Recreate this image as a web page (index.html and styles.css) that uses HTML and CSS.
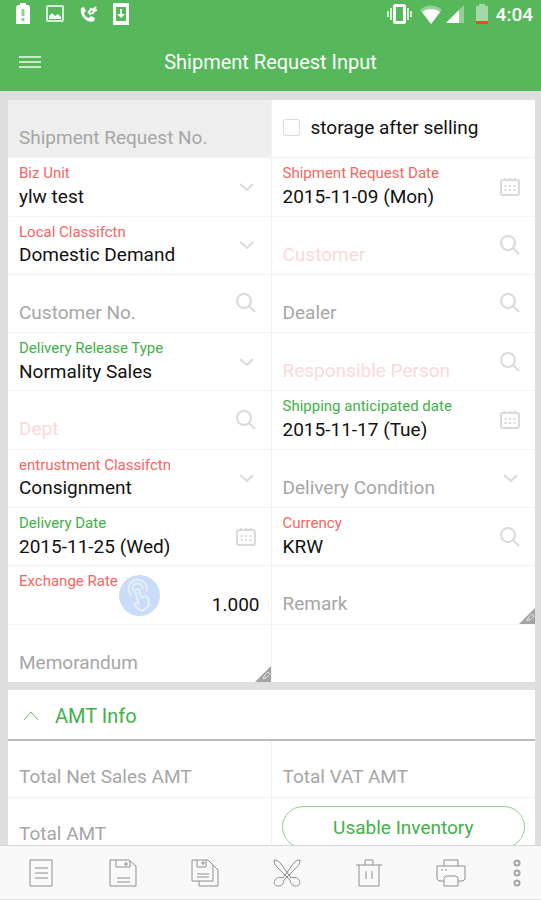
FILE: index.html
```html
<!DOCTYPE html>
<html lang="en">
<head>
    <meta charset="UTF-8">
    <meta name="viewport" content="width=device-width, initial-scale=1.0">
    <title>Shipment Request Input</title>
    <link rel="stylesheet" href="styles.css">
</head>
<body>
    <!-- Shared icons -->
    <svg class="sprite" aria-hidden="true">
        <symbol id="arrow" viewBox="0 0 20 20"><path d="M4 7l7 6 6-6"/></symbol>
        <symbol id="search" viewBox="0 0 20 20"><circle cx="8" cy="8" r="7"/><path d="M13 13l6 6"/></symbol>
        <symbol id="calendar" viewBox="0 0 20 20"><rect x="1" y="3" width="18" height="15" rx="2"/><path d="M5 1v3M10 1v3M15 1v3M4.500 9h2M9 9h2M13.500 9h2M4.500 13h2M9 13h2M13.500 13h2"/></symbol>
        <symbol id="corner" viewBox="0 0 16 16"><path class="corner-fill" d="M16 0v16H0z"/><path class="corner-pen" d="M8 13l1-3 4-4 2 2-4 4zM9.500 10l2 2"/></symbol>
    </svg>

    <header>
        <div class="status-bar">
            <svg width="14" height="22" viewBox="0 0 14 22"><path fill="#fff" d="M4 0h6v2h2.500L14 4v17H0V4l1.500-2H4z"/><path stroke="#8fcf93" stroke-width="3" d="M7 6v7M7 15v3"/></svg>
            <svg width="18" height="18" viewBox="0 0 18 18"><rect x="1" y="1" width="16" height="15" rx="1" fill="none" stroke="#d5efd7" stroke-width="2"/><path fill="#fff" d="M3 14v-3l3-3 3 3 3-2 3 3v2z"/></svg>
            <svg width="17" height="17" viewBox="0 0 17 17"><path fill="#fff" d="M1 2l3-1 2 4-2 2c1 3 2 4 5 5l2-2 4 2-1 3c-2 1-5 1-8-1C2 11 0 7 1 2z"/><path fill="none" stroke="#fff" stroke-width="2" d="M8 7l3-4 2 1 3-3M9 8l4-1 1-2 3-1"/></svg>
            <svg width="16" height="22" viewBox="0 0 16 22"><path fill="#fff" fill-rule="evenodd" d="M0 0h16v22H0zM3 4v14h10V4z"/><path fill="#fff" d="M7 6h2v5h3l-4 4-4-4h3z"/></svg>
            <span class="spacer"></span>
            <svg width="25" height="20" viewBox="0 0 25 20"><rect x="7.500" y="1.500" width="10" height="17" rx="1" fill="none" stroke="#fff" stroke-width="3"/><path stroke="#d5efd7" stroke-width="2" d="M4 4v12M21 4v12M1 7v6M24 7v6"/></svg>
            <svg width="22" height="19" viewBox="0 0 22 19"><path fill="#94d198" d="M0 5c6-6 16-6 22 0L11 19z"/><path fill="#fff" d="M2 7c5-4 13-4 18 0l-9 12z"/></svg>
            <svg width="18" height="18" viewBox="0 0 18 18"><path fill="#94d198" d="M18 0v18H0z"/><path fill="#fff" d="M13 5v13H0z"/></svg>
            <svg class="battery" width="12" height="20" viewBox="0 0 12 20"><path fill="#a4d8a7" d="M3 0h6v2h3v18H0V2h3z"/><path fill="#d9531e" d="M0 17h12v3H0z"/></svg>
            <span class="clock">4:04</span>
        </div>
        <div class="app-bar">
            <button class="menu-button" aria-label="Menu">
                <svg width="22" height="14" viewBox="0 0 22 14"><path stroke="#c8e9ca" stroke-width="2" d="M0 2h22M0 7h22M0 12h22"/></svg>
            </button>
            <h1>Shipment Request Input</h1>
        </div>
    </header>

    <main>
        <form class="card fields">
            <div class="field empty disabled">
                <label for="requestNo">Shipment Request No.</label>
                <input id="requestNo" type="text" disabled>
            </div>
            <div class="check-field">
                <input id="storage" type="checkbox">
                <label for="storage">storage after selling</label>
            </div>

            <div class="field required">
                <label for="bizUnit">Biz Unit</label>
                <select id="bizUnit"><option>ylw test</option></select>
                <svg class="icon"><use href="#arrow"/></svg>
            </div>
            <div class="field required">
                <label for="requestDate">Shipment Request Date</label>
                <input id="requestDate" type="text" value="2015-11-09 (Mon)">
                <button type="button" class="icon-button" aria-label="Pick date"><svg class="icon"><use href="#calendar"/></svg></button>
            </div>

            <div class="field required">
                <label for="localClass">Local Classifctn</label>
                <select id="localClass"><option>Domestic Demand</option></select>
                <svg class="icon"><use href="#arrow"/></svg>
            </div>
            <div class="field empty required">
                <label for="customer">Customer</label>
                <input id="customer" type="text">
                <button type="button" class="icon-button" aria-label="Search"><svg class="icon"><use href="#search"/></svg></button>
            </div>

            <div class="field empty">
                <label for="customerNo">Customer No.</label>
                <input id="customerNo" type="text">
                <button type="button" class="icon-button" aria-label="Search"><svg class="icon"><use href="#search"/></svg></button>
            </div>
            <div class="field empty">
                <label for="dealer">Dealer</label>
                <input id="dealer" type="text">
                <button type="button" class="icon-button" aria-label="Search"><svg class="icon"><use href="#search"/></svg></button>
            </div>

            <div class="field">
                <label for="releaseType">Delivery Release Type</label>
                <select id="releaseType"><option>Normality Sales</option></select>
                <svg class="icon"><use href="#arrow"/></svg>
            </div>
            <div class="field empty required">
                <label for="person">Responsible Person</label>
                <input id="person" type="text">
                <button type="button" class="icon-button" aria-label="Search"><svg class="icon"><use href="#search"/></svg></button>
            </div>

            <div class="field empty required">
                <label for="dept">Dept</label>
                <input id="dept" type="text">
                <button type="button" class="icon-button" aria-label="Search"><svg class="icon"><use href="#search"/></svg></button>
            </div>
            <div class="field">
                <label for="shippingDate">Shipping anticipated date</label>
                <input id="shippingDate" type="text" value="2015-11-17 (Tue)">
                <button type="button" class="icon-button" aria-label="Pick date"><svg class="icon"><use href="#calendar"/></svg></button>
            </div>

            <div class="field required">
                <label for="entrustment">entrustment Classifctn</label>
                <select id="entrustment"><option>Consignment</option></select>
                <svg class="icon"><use href="#arrow"/></svg>
            </div>
            <div class="field empty">
                <label for="condition">Delivery Condition</label>
                <select id="condition"><option></option></select>
                <svg class="icon"><use href="#arrow"/></svg>
            </div>

            <div class="field">
                <label for="deliveryDate">Delivery Date</label>
                <input id="deliveryDate" type="text" value="2015-11-25 (Wed)">
                <button type="button" class="icon-button" aria-label="Pick date"><svg class="icon"><use href="#calendar"/></svg></button>
            </div>
            <div class="field required">
                <label for="currency">Currency</label>
                <input id="currency" type="text" value="KRW">
                <button type="button" class="icon-button" aria-label="Search"><svg class="icon"><use href="#search"/></svg></button>
            </div>

            <div class="field required">
                <label for="rate">Exchange Rate</label>
                <input id="rate" class="number" type="text" value="1.000">
                <svg class="touch" viewBox="0 0 40 40"><circle class="touch-disc" cx="20" cy="20" r="20"/><path d="M12 20a9 9 0 1 1 15-4M14 16a5 5 0 1 1 9-2M16 16c0-3 4-3 4 0l2 6 4-1c2 0 3 2 3 4v5l-6 5c-3-1-6-3-8-6 0-2 2-2 4-1z"/></svg>
            </div>
            <div class="field empty">
                <label for="remark">Remark</label>
                <input id="remark" type="text">
                <svg class="corner"><use href="#corner"/></svg>
            </div>

            <div class="field empty">
                <label for="memo">Memorandum</label>
                <input id="memo" type="text">
                <svg class="corner"><use href="#corner"/></svg>
            </div>
        </form>

        <section class="card">
            <button class="section-title">
                <svg width="18" height="18" viewBox="0 0 18 18"><path d="M2 13l7-8 7 8"/></svg>
                AMT Info
            </button>
            <div class="fields amounts">
                <div class="field empty">
                    <label for="netSales">Total Net Sales AMT</label>
                    <input id="netSales" type="text">
                </div>
                <div class="field empty">
                    <label for="vat">Total VAT AMT</label>
                    <input id="vat" type="text">
                </div>
                <div class="field empty">
                    <label for="total">Total AMT</label>
                    <input id="total" type="text">
                </div>
                <div class="action">
                    <button class="pill">Usable Inventory</button>
                </div>
            </div>
        </section>
    </main>

    <nav class="toolbar">
        <button aria-label="List"><svg viewBox="0 0 30 30"><path d="M4 2h22v26H4zM9 10h13M9 15h13M9 20h13"/></svg></button>
        <button aria-label="Save"><svg viewBox="0 0 30 30"><path d="M2 2h19l7 6v20H2zM8 2v7h14V3M17 5h2v2h-2zM9 20h13M9 24h13"/></svg></button>
        <button aria-label="Save as"><svg viewBox="0 0 30 30"><path d="M2 2h16l5 5v16H2zM7 2v7h9V2M12 4h2v2h-2zM7 16h12M7 19h12M20 4l8 8v16H9v-5"/></svg></button>
        <button aria-label="Cut"><svg viewBox="0 0 30 30"><path d="M2 2c3 0 5 1 7 4l10 14c3-1 6-1 8 2 2 4 0 6-4 6-3 0-4-2-5-6L5 9C3 7 2 5 2 2zM28 2c-3 0-5 1-7 4L11 20c-3-1-6-1-8 2-2 4 0 6 4 6 3 0 4-2 5-6L25 9c2-2 3-4 3-7z"/></svg></button>
        <button aria-label="Delete"><svg viewBox="0 0 30 30"><path d="M2 7h26M5 7v21h20V7M11 7V2h8v5M12 13v8M18 13v8"/></svg></button>
        <button aria-label="Print"><svg viewBox="0 0 30 30"><path d="M8 8V2h14v6M8 23H3l-2-2V8h28v13l-2 2h-5M10 18h10l2 2v8H8v-8zM5 12h2M9 12h2"/></svg></button>
        <button class="more" aria-label="More"><svg viewBox="0 0 30 30"><circle cx="15" cy="5" r="2.500"/><circle cx="15" cy="15" r="2.500"/><circle cx="15" cy="25" r="2.500"/></svg></button>
    </nav>
</body>
</html>
```
FILE: styles.css
```css
* {
    box-sizing: border-box;
}
body {
    font-family: Roboto, sans-serif;
    font-size: 19px;
    background-color: #dfdfdf;
    color: #111;
    display: flex;
    flex-direction: column;
    height: 100vh;
    margin: 0;
}
button, input, select {
    font: inherit;
    color: inherit;
    background: none;
    border: 0;
    border-radius: 0;
    margin: 0;
    padding: 0;
}
button {
    cursor: pointer;
}
svg {
    display: block;
    flex: none;
}
.sprite {
    position: absolute;
    width: 0;
    height: 0;
}

/* Header */
header {
    background-color: #56b85b;
    color: #fff;
    flex: none;
}
.status-bar {
    display: flex;
    align-items: center;
    height: 28px;
    gap: 16px;
    padding: 0 8px 0 16px;
}
.status-bar .spacer {
    flex: 1;
}
.status-bar .spacer ~ * {
    margin-left: -8px;
}
.status-bar .spacer ~ svg:nth-of-type(7) {
    margin-left: -12px;
}
.status-bar .spacer ~ .battery {
    margin-left: -4px;
}
.clock {
    font-size: 19px;
    font-weight: 500;
}
.app-bar {
    display: grid;
    grid-template-columns: 60px 1fr 60px;
    align-items: center;
    padding: 4px 0 0;
    height: 63px;
}
.menu-button {
    padding: 12px 19px;
}
h1 {
    font-size: 20px;
    font-weight: 400;
    text-align: center;
    margin: 0;
}

/* Form */
main {
    flex: 1;
    min-height: 0;
    overflow: hidden;
    padding: 9px 6px 0 8px;
}
.card {
    background-color: #fff;
    margin-bottom: 8px;
}
.fields {
    display: grid;
    grid-template-columns: 1fr 1fr;
}
form.fields {
    min-height: 582px;
}
.field {
    position: relative;
    display: grid;
    grid-template-columns: 1fr 24px;
    grid-template-rows: 16px 24px;
    row-gap: 3px;
    padding: 7px 11px 7px 11px;
    border-bottom: 1px solid #f3f3f3;
    min-width: 0;
}
.field:nth-child(odd) {
    border-right: 1px solid #f3f3f3;
}
.field:last-child {
    border-bottom: 0;
}
.field label {
    grid-area: 1 / 1;
    font-size: 15px;
    line-height: 16px;
    white-space: nowrap;
    color: #43b04a;
}
.field input,
.field select {
    grid-area: 2 / 1;
    width: 100%;
    min-width: 0;
    height: 24px;
    appearance: none;
    outline: none;
}
.field.required label {
    color: #f4665f;
}
.field.empty label {
    grid-area: 2 / 1;
    align-self: center;
    font-size: 19px;
    line-height: 18px;
    color: #a6a6a6;
}
.field.empty.required label {
    color: #fbd9d9;
}
.field.disabled {
    background-color: #eee;
}
.field .number {
    grid-column: 1 / 3;
    text-align: right;
}
.icon-button,
.field > .icon {
    grid-area: 1 / 2 / 3 / 3;
    place-self: center start;
}
.icon {
    width: 20px;
    height: 20px;
    fill: none;
    stroke: #dadada;
    stroke-width: 2;
    pointer-events: none;
}
.corner {
    position: absolute;
    right: 0;
    bottom: 0;
    width: 16px;
    height: 16px;
}
.corner-fill {
    fill: #a3a3a3;
}
.corner-pen {
    fill: none;
    stroke: #e2e2e2;
}
.touch {
    position: absolute;
    left: 111px;
    top: 9px;
    width: 41px;
    height: 41px;
    fill: none;
    stroke: #e4eefc;
    stroke-width: 2;
}
.touch-disc {
    fill: #c9dcf8;
    stroke: none;
}
.check-field {
    display: flex;
    align-items: center;
    gap: 11px;
    padding: 0 11px 2px;
    border-bottom: 1px solid #f3f3f3;
}
.check-field input {
    appearance: none;
    width: 17px;
    height: 17px;
    border: 1px solid #dcdcdc;
    border-radius: 2px;
}
.check-field input:checked {
    background-color: #56b85b;
}

/* Amount section */
.section-title {
    display: flex;
    align-items: center;
    gap: 15px;
    width: 100%;
    height: 51px;
    padding: 2px 14px 0;
    border-bottom: 2px solid #bcbcbc;
    font-size: 20px;
    color: #43b04a;
}
.section-title svg {
    fill: none;
    stroke: #6cc271;
}
.amounts .field {
    padding-top: 5px;
    padding-bottom: 8px;
}
.action {
    padding: 8px 10px;
}
.pill {
    width: 100%;
    height: 42px;
    border: 1px solid #8fcf93;
    border-radius: 21px;
    color: #43b04a;
}

/* Bottom toolbar */
.toolbar {
    display: flex;
    flex: none;
    height: 55px;
    background-color: #f9f9f9;
    border-top: 1px solid #d8d8d8;
    border-bottom: 1px solid #e2e2e2;
}
.toolbar button {
    flex: 1;
    display: flex;
    align-items: center;
    justify-content: center;
}
.toolbar .more {
    flex: 0 0 49px;
}
.toolbar svg {
    width: 30px;
    height: 30px;
    fill: none;
    stroke: #8f8f8f;
    stroke-width: 1;
}
.toolbar .more svg {
    stroke: #a5a5a5;
    stroke-width: 2;
}
```
